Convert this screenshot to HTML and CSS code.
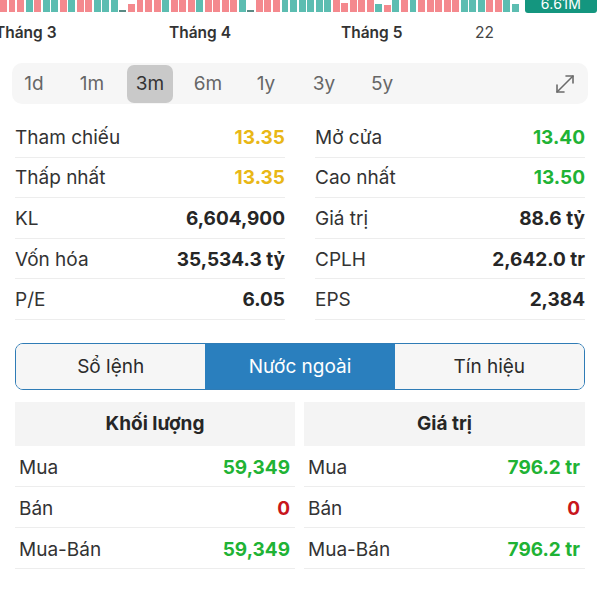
FILE: index.html
```html
<!DOCTYPE html>
<html lang="vi">
<head>
<meta charset="utf-8">
<link rel="stylesheet" href="styles.css">
</head>
<body>
<div class="page">
  <div class="chart">
    <div class="bars">
      <span class="bar r"></span><span class="bar r"></span><span class="bar r"></span><span class="bar t"></span><span class="bar r"></span><span class="bar t"></span><span class="bar t"></span><span class="bar r"></span><span class="bar t"></span><span class="bar r"></span><span class="bar r"></span><span class="bar t"></span><span class="bar t"></span><span class="bar t"></span><span class="bar g" style="height:2px"></span><span class="bar r" style="height:8px"></span><span class="bar r"></span><span class="bar r"></span><span class="bar r"></span><span class="bar t"></span><span class="bar r"></span><span class="bar r"></span><span class="bar r"></span><span class="bar t"></span>
      <span class="bar r"></span><span class="bar r"></span><span class="bar r"></span><span class="bar r"></span><span class="bar t"></span><span class="bar g" style="height:2px"></span><span class="bar r"></span><span class="bar r"></span><span class="bar r"></span><span class="bar t"></span><span class="bar t"></span><span class="bar t"></span><span class="bar t"></span><span class="bar t"></span><span class="bar t"></span><span class="bar r"></span><span class="bar r" style="height:9px"></span><span class="bar r"></span><span class="bar r"></span><span class="bar r"></span><span class="bar t" style="height:8px"></span><span class="bar r" style="height:7px"></span><span class="bar t"></span><span class="bar r"></span>
      <span class="bar t"></span><span class="bar r"></span><span class="bar r"></span><span class="bar r"></span><span class="bar r"></span><span class="bar r"></span><span class="bar t"></span><span class="bar t"></span><span class="bar t"></span><span class="bar r"></span><span class="bar r"></span><span class="bar t"></span><span class="bar t" style="height:8px"></span>
    </div>
    <div class="badge">6.61M</div>
  </div>
  <div class="axis">
    <span class="tick m3">Tháng 3</span>
    <span class="tick m4">Tháng 4</span>
    <span class="tick m5">Tháng 5</span>
    <span class="tick day">22</span>
  </div>

  <div class="periods">
    <span class="period">1d</span>
    <span class="period">1m</span>
    <span class="period active">3m</span>
    <span class="period">6m</span>
    <span class="period">1y</span>
    <span class="period">3y</span>
    <span class="period">5y</span>
    <span class="spacer"></span>
    <svg class="expand" width="22" height="22" viewBox="0 0 22 22" fill="none" stroke="#6b6b6b" stroke-width="1.6" stroke-linecap="round" stroke-linejoin="round">
      <path d="M3 19 L19 3"/>
      <path d="M12 3 H19 V10"/>
      <path d="M3 12 V19 H10"/>
    </svg>
  </div>

  <div class="stats">
    <div class="col">
      <div class="row"><span class="lbl">Tham chiếu</span><span class="val yellow">13.35</span></div>
      <div class="row"><span class="lbl">Thấp nhất</span><span class="val yellow">13.35</span></div>
      <div class="row"><span class="lbl">KL</span><span class="val">6,604,900</span></div>
      <div class="row"><span class="lbl">Vốn hóa</span><span class="val">35,534.3 tỷ</span></div>
      <div class="row"><span class="lbl">P/E</span><span class="val">6.05</span></div>
    </div>
    <div class="col">
      <div class="row"><span class="lbl">Mở cửa</span><span class="val green">13.40</span></div>
      <div class="row"><span class="lbl">Cao nhất</span><span class="val green">13.50</span></div>
      <div class="row"><span class="lbl">Giá trị</span><span class="val">88.6 tỷ</span></div>
      <div class="row"><span class="lbl">CPLH</span><span class="val">2,642.0 tr</span></div>
      <div class="row"><span class="lbl">EPS</span><span class="val">2,384</span></div>
    </div>
  </div>

  <div class="tabs">
    <div class="tab">Sổ lệnh</div>
    <div class="tab selected">Nước ngoài</div>
    <div class="tab">Tín hiệu</div>
  </div>

  <div class="tables">
    <div class="table">
      <div class="thead">Khối lượng</div>
      <div class="trow"><span class="lbl">Mua</span><span class="val green">59,349</span></div>
      <div class="trow"><span class="lbl">Bán</span><span class="val red">0</span></div>
      <div class="trow"><span class="lbl">Mua-Bán</span><span class="val green">59,349</span></div>
    </div>
    <div class="table">
      <div class="thead">Giá trị</div>
      <div class="trow"><span class="lbl">Mua</span><span class="val green">796.2 tr</span></div>
      <div class="trow"><span class="lbl">Bán</span><span class="val red">0</span></div>
      <div class="trow"><span class="lbl">Mua-Bán</span><span class="val green">796.2 tr</span></div>
    </div>
  </div>
</div>
</body>
</html>
```

FILE: styles.css
```css
* { box-sizing: border-box; }
html, body {
  margin: 0;
  padding: 0;
  background: #ffffff;
}
body {
  width: 600px;
  height: 600px;
  overflow: hidden;
  font-family: Inter, "Liberation Sans", "Noto Sans", sans-serif;
  color: #2b2b2b;
}
.page {
  width: 600px;
}
.chart {
  display: flex;
  align-items: flex-start;
  height: 14px;
}
.bars {
  display: flex;
  align-items: flex-end;
  height: 12px;
  width: 524px;
  gap: 1.6px;
  padding-left: 0;
}
.bar {
  width: 6.95px;
  height: 12px;
  flex: none;
}
.bar.r { background: #f4898e; }
.bar.t { background: #5cbdb1; }
.bar.g { background: #5a8a84; }
.badge {
  margin-left: 1px;
  width: 72px;
  height: 13px;
  background: #14967f;
  color: #ffffff;
  font-size: 14px;
  line-height: 8px;
  text-align: center;
  border-radius: 0 0 3px 3px;
  overflow: hidden;
  letter-spacing: 0.3px;
}
.axis {
  position: relative;
  height: 40px;
  font-size: 15.5px;
}
.tick {
  position: absolute;
  top: 9px;
  font-weight: 600;
  color: #333;
}
.m3 { left: -5px; }
.m4 { left: 169px; }
.m5 { left: 341px; }
.day { left: 475px; font-weight: 400; color: #444; }

.periods {
  margin: 9px 12px 0 12px;
  height: 41px;
  background: #f6f6f6;
  border-radius: 10px;
  display: flex;
  align-items: center;
  gap: 12px;
  padding: 0 12px 0 0;
}
.period {
  width: 46px;
  height: 38px;
  display: flex;
  align-items: center;
  justify-content: center;
  font-size: 19px;
  color: #666;
  border-radius: 7px;
}
.period:first-child { margin-left: -1px; }
.period.active {
  background: #c9c9c9;
  color: #333;
}
.spacer { flex: 1; }

.stats {
  display: grid;
  grid-template-columns: 270px 270px;
  column-gap: 30px;
  margin: 13px 15px 0 15px;
}
.row {
  height: 40.6px;
  display: flex;
  align-items: center;
  justify-content: space-between;
  border-bottom: 1px solid #ededed;
  font-size: 19px;
  padding-top: 1px;
}
.lbl { color: #333; }
.val { font-weight: 700; color: #262626; }
.yellow { color: #e9b716; }
.green { color: #1fb335; }
.red { color: #c8161c; }

.tabs {
  margin: 23px 15px 0 15px;
  height: 47px;
  display: flex;
  border: 1.5px solid #2f7cb6;
  border-radius: 8px;
  overflow: hidden;
}
.tab {
  flex: 1;
  display: flex;
  align-items: center;
  justify-content: center;
  background: #f6f6f6;
  font-size: 19px;
  color: #2b2b2b;
}
.tab.selected {
  background: #2a7fbe;
  color: #ffffff;
}

.tables {
  margin: 12px 15px 0 15px;
  display: grid;
  grid-template-columns: 280px 281px;
  column-gap: 9px;
}
.thead {
  height: 44px;
  background: #f4f4f4;
  display: flex;
  align-items: center;
  justify-content: center;
  font-weight: 700;
  font-size: 19px;
  color: #262626;
}
.trow {
  height: 41px;
  display: flex;
  align-items: center;
  justify-content: space-between;
  border-bottom: 1px solid #ededed;
  font-size: 19px;
  padding: 3px 5px 0 4px;
}
```
